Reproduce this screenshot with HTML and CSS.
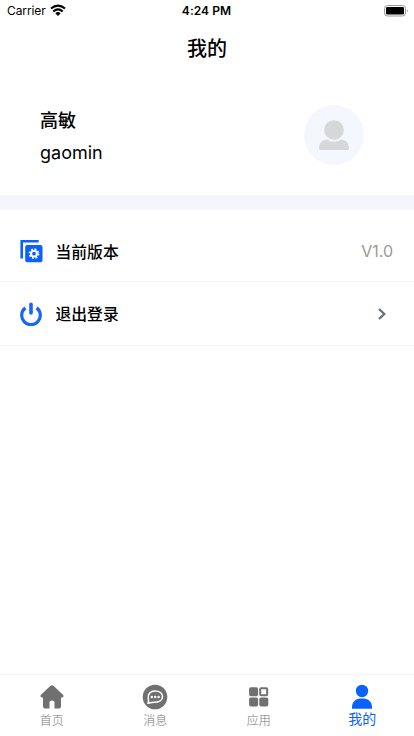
FILE: index.html
```html
<!DOCTYPE html>
<html lang="zh-CN">
<head>
<meta charset="utf-8">
<meta name="viewport" content="width=device-width, initial-scale=1">
<title>我的</title>
<link rel="stylesheet" href="styles.css">
</head>
<body>
<div class="app">
  <header class="status">
    <div class="carrier">
      <span>Carrier</span>
      <svg width="16" height="12" viewBox="0 0 16 12" fill="none" stroke="#000" stroke-width="2.200"><path d="M1 4.500Q8-1.200 15 4.500M3.300 7.500Q8 3.300 12.700 7.500"/><path d="M5.300 9.200Q8 7 10.700 9.200L8 12Z" fill="#000" stroke="none"/></svg>
    </div>
    <span class="time">4:24 PM</span>
    <svg class="battery" width="25" height="12" viewBox="0 0 25 12"><rect x=".5" y=".5" width="21" height="10.500" rx="3" fill="#fff" stroke="#999"/><rect x="2" y="2" width="18" height="7.500" rx="1.300"/><path d="M23 4q1.500 1.700 0 3.500z" fill="#888"/></svg>
  </header>
  <h1 class="title">我的</h1>
  <section class="profile">
    <div class="identity">
      <div class="name">高敏</div>
      <div class="account">gaomin</div>
    </div>
    <div class="avatar">
      <svg width="60" height="60" viewBox="0 0 60 60" fill="#d6d7d8"><circle cx="30" cy="25" r="9.800"/><path d="M15 43.500C15 38 18.500 34.500 23 34.500Q30 39 37 34.500C41.500 34.500 45 38 45 43.500Q45 45 43.500 45H16.500Q15 45 15 43.500Z"/></svg>
    </div>
  </section>
  <main class="menu">
    <div class="row version">
      <svg width="24" height="24" viewBox="0 0 24 24"><path d="M18.700 2.300H1.700V19.500" fill="none" stroke="#0b62fb" stroke-width="2.600"/><rect x="5.200" y="6" width="17.300" height="17.300" rx="2" fill="#0b62fb"/><circle cx="14" cy="14.600" r="4.500" fill="none" stroke="#fff" stroke-width="1.800" stroke-dasharray="1.767 1.767"/><circle cx="14" cy="14.600" r="2.900" fill="none" stroke="#fff" stroke-width="2"/></svg>
      <span class="label">当前版本</span>
      <span class="value">V1.0</span>
    </div>
    <div class="row">
      <svg width="24" height="24" viewBox="0 0 24 24" fill="none" stroke="#1767f7" stroke-width="3.200"><path d="M5.400 5.900A9.300 9.300 0 1 0 16.600 5.900"/><path d="M11 2.300V11" stroke-width="3.600" stroke-linecap="round"/></svg>
      <span class="label">退出登录</span>
      <svg class="chevron" width="10" height="14" viewBox="0 0 10 14" fill="none" stroke="#66717c" stroke-width="2.300"><path d="M2 2L7.300 7L2 12"/></svg>
    </div>
  </main>
  <nav class="tabs">
    <div class="tab">
      <svg width="26" height="26" viewBox="0 0 26 26"><path d="M11.500 1.800Q13 .5 14.500 1.800L24.200 11Q25.200 13.200 23 13.500H22V22.500Q22 24.500 20 24.500H15.500V18Q15.500 16.500 13 16.500T10.500 18V24.500H6Q4 24.500 4 22.500V13.500H3Q.8 13.200 1.800 11Z" fill="#707070"/></svg>
      <span>首页</span>
    </div>
    <div class="tab">
      <svg width="26" height="26" viewBox="0 0 26 26"><circle cx="13" cy="13" r="12.300" fill="#707070"/><path d="M6 19.300Q7 17 6.300 14.500C5.500 10 8.500 7 13 7S20.500 9.200 20.500 12.600S17.500 18.300 13 18.300Q10 18.300 6 19.300Z" fill="none" stroke="#fff" stroke-width="1.600" stroke-linejoin="round"/><g fill="#fff"><circle cx="9.800" cy="13" r="1.200"/><circle cx="13.200" cy="13" r="1.200"/><circle cx="16.600" cy="13" r="1.200"/></g></svg>
      <span>消息</span>
    </div>
    <div class="tab">
      <svg width="26" height="26" viewBox="0 0 26 26" fill="#707070"><rect x="3.100" y="3.300" width="9" height="9" rx="1.800"/><rect x="14.200" y="4.300" width="7" height="7" rx="1" fill="none" stroke="#707070" stroke-width="2"/><rect x="3.100" y="13.500" width="9" height="9" rx="1.800"/><rect x="13.300" y="13.500" width="9" height="9" rx="1.800"/></svg>
      <span>应用</span>
    </div>
    <div class="tab active">
      <svg width="26" height="26" viewBox="0 0 26 26" fill="#0b62fb"><circle cx="13" cy="7" r="6.200"/><path d="M3 24.700V23C3 18 7 14.500 11 14.500H15C19 14.500 23 18 23 23V24.700Z"/></svg>
      <span>我的</span>
    </div>
  </nav>
</div>
</body>
</html>
```

FILE: styles.css
```css
* { box-sizing: border-box; }
body { margin: 0; background: #fff; color: #000; font-family: Inter, "Noto Sans CJK SC", sans-serif; }
svg { display: block; flex: none; }
.app { height: 736px; display: flex; flex-direction: column; overflow: hidden; }
.status { height: 20px; padding: 2px 6px 0 5px; display: grid; grid-template-columns: 1fr auto 1fr; align-items: center; font-size: 12px; line-height: 18px; }
.carrier { padding-left: 2px; display: flex; align-items: center; gap: 4px; letter-spacing: -.1px; }
.carrier svg { margin-top: -2px; }
.time { font-weight: 600; letter-spacing: .05px; }
.battery { justify-self: end; margin: -1px -1px 0 0; }
.title { height: 55px; margin: 0; padding-top: 2px; text-align: center; font-size: 20px; font-weight: 500; line-height: 55px; }
.profile { height: 120px; padding: 0 50px 0 40px; display: flex; align-items: center; justify-content: space-between; }
.identity { padding-top: 3px; }
.name { font-size: 18px; font-weight: 500; line-height: 33px; }
.account { font-size: 18px; line-height: 32px; }
.avatar { width: 60px; height: 60px; border-radius: 50%; background: #f4f8fe; }
.menu { flex: 1; border-top: 15px solid #f4f6fb; }
.row { height: 64px; padding: 0 21px 0 20px; display: flex; align-items: center; border-bottom: 1px solid #f5f5f5; }
.version { height: 72px; padding-top: 11px; }
.label { margin-left: 11.5px; font-size: 15.8px; font-weight: 500; line-height: 24px; padding-top: 3px; }
.value { margin-left: auto; font-size: 16px; color: #999; }
.chevron { margin: 0 6px 0 auto; }
.tabs { height: 62px; border-top: 1px solid #f5f5f5; display: grid; grid-template-columns: repeat(4, 1fr); }
.tab { display: flex; flex-direction: column; align-items: center; padding-top: 9px; color: #777; font-size: 12px; font-weight: 300; line-height: 22px; }
.active { color: #0b62fb; font-size: 14px; font-weight: 400; line-height: 18px; }
```
